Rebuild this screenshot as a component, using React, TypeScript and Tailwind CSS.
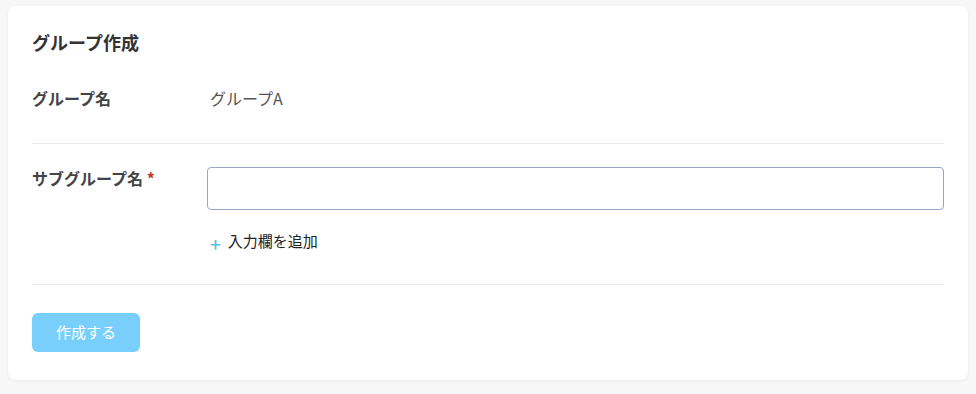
import React, { useState } from 'react';

const font = { fontFamily: '"Noto Sans CJK JP", "Noto Sans", sans-serif' };

export default function App() {
  const [names, setNames] = useState<string[]>(['']);

  return (
    <div className="min-h-screen bg-[#f7f7f7] pt-[6px] px-2" style={font}>
      <div className="bg-white rounded-lg shadow-[0_1px_3px_rgba(0,0,0,0.06)] px-6 pt-6 pb-[28px]">
        <h2 className="text-[18px] leading-6 font-bold text-[#333]">グループ作成</h2>

        <div className="flex pt-[33px] pb-[34px] border-b border-[#ebebeb]">
          <div className="w-[175px] text-[16px] leading-[22px] font-bold text-[#444]">グループ名</div>
          <div className="pl-[3px] text-[16px] leading-[22px] text-[#555]">グループA</div>
        </div>

        <div className="flex pt-[23px] pb-[31px] border-b border-[#ebebeb]">
          <div className="w-[175px] text-[16px] leading-[22px] font-bold text-[#444]">
            サブグループ名 <span className="text-[#c0392b]">*</span>
          </div>
          <div className="flex-1">
            {names.map((n, i) => (
              <input
                key={i}
                type="text"
                value={n}
                onChange={(e) => setNames(names.map((v, j) => (j === i ? e.target.value : v)))}
                className="block w-full h-[43px] rounded border border-[#97a6c8] px-3 text-[15px] outline-none mb-[18px]"
              />
            ))}
            <button
              onClick={() => setNames([...names, ''])}
              className="flex items-center pl-[3px] text-[15px] leading-[22px] text-[#222]"
            >
              <span className="text-[#5bbfe6] text-[19px] font-medium leading-none mt-[6px] mr-[7px]">+</span>
              入力欄を追加
            </button>
          </div>
        </div>

        <button className="mt-[28px] w-[108px] h-[39px] rounded-md bg-[#79cffb] text-white text-[15px]">
          作成する
        </button>
      </div>
    </div>
  );
}
